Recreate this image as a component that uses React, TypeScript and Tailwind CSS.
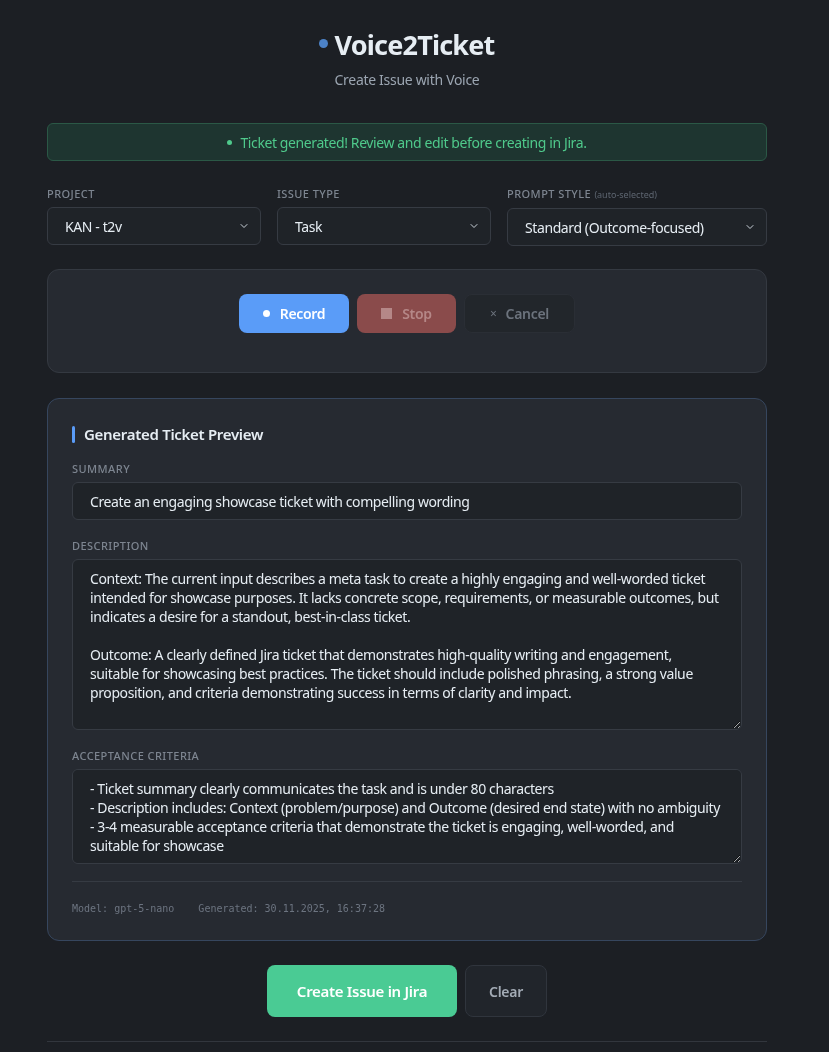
import { ChevronDown } from "lucide-react";

const font = { fontFamily: '"Noto Sans", "Segoe UI", sans-serif' };

function Label({ children }: { children: React.ReactNode }) {
  return (
    <div className="text-[11px] font-medium uppercase tracking-[0.04em] text-[#7d8590] mb-[6px] leading-[14px]">
      {children}
    </div>
  );
}

function Select({ value }: { value: string }) {
  return (
    <div className="h-[38px] flex items-center justify-between pl-[17px] pr-[10px] bg-[#1f2328] border border-[#363b43] rounded-[6px] text-[14px] tracking-[-0.4px] text-[#e6edf3]">
      <span>{value}</span>
      <ChevronDown className="w-[12px] h-[12px] text-[#c9d1d9]" strokeWidth={2} />
    </div>
  );
}

const fieldCls =
  "block w-full resize-y pl-[17px] pr-[19px] py-[9px] bg-[#1f2328] border border-[#363b43] rounded-[6px] text-[14px] leading-[19px] tracking-[-0.4px] text-[#e6edf3] outline-none";

export default function App() {
  return (
    <div className="min-h-screen bg-[#1c1f24] text-[#e6edf3] pr-[15px]" style={font}>
      <div className="max-w-[720px] mx-auto pt-[28px] pb-[12px]">
        {/* Header */}
        <div className="flex flex-col items-center">
          <div className="flex items-center gap-[6px]">
            <span className="w-[9px] h-[9px] rounded-full bg-[#4c82c7] -mt-[3px]" />
            <h1 className="text-[27px] font-bold leading-[34px] text-[#e6edf3] tracking-[-0.8px]">Voice2Ticket</h1>
          </div>
          <p className="text-[14px] text-[#9ba5b1] mt-[9px] leading-[18px] tracking-[-0.3px]">Create Issue with Voice</p>
        </div>

        {/* Status */}
        <div className="mt-[34px] h-[38px] flex items-center justify-center gap-[8px] rounded-[6px] bg-[#1e3530] border border-[#2b5846] text-[14px] tracking-[-0.4px] text-[#4fc98b]">
          <span className="w-[5px] h-[5px] rounded-full bg-[#4fc98b]" />
          Ticket generated! Review and edit before creating in Jira.
        </div>

        {/* Selects */}
        <div className="mt-[26px] grid grid-cols-[214px_214px_1fr] gap-[16px]">
          <div>
            <Label>Project</Label>
            <Select value="KAN - t2v" />
          </div>
          <div>
            <Label>Issue Type</Label>
            <Select value="Task" />
          </div>
          <div>
            <Label>
              Prompt Style <span className="normal-case font-normal text-[9px] tracking-normal text-[#5d6570]">(auto-selected)</span>
            </Label>
            <Select value="Standard (Outcome-focused)" />
          </div>
        </div>

        {/* Recorder */}
        <div className="mt-[23px] h-[104px] rounded-[12px] bg-[#262a31] border border-[#343941] pt-[24px] flex justify-center gap-[8px]">
          <button className="h-[39px] w-[110px] rounded-[8px] bg-[#5a9cf8] text-white text-[14px] font-semibold tracking-[-0.3px] flex items-center justify-center gap-[10px]">
            <span className="w-[7px] h-[7px] rounded-full bg-white" />
            Record
          </button>
          <button className="h-[39px] w-[99px] rounded-[8px] bg-[#8a4b4b] text-[#b58787] text-[14px] font-semibold tracking-[-0.3px] flex items-center justify-center gap-[10px]">
            <span className="w-[11px] h-[11px] bg-[#b58787]" />
            Stop
          </button>
          <button className="h-[39px] w-[111px] rounded-[8px] bg-[#22262b] border border-[#2a2e35] text-[#6c737d] text-[14px] font-semibold tracking-[-0.3px] flex items-center justify-center gap-[9px]">
            <span className="text-[12px] font-normal">×</span>
            Cancel
          </button>
        </div>

        {/* Preview */}
        <div className="mt-[25px] rounded-[12px] bg-[#262a31] border border-[#36465e] px-[24px] pt-[26px] pb-[24px]">
          <div className="flex items-center gap-[9px]">
            <span className="w-[3px] h-[17px] rounded-full bg-[#5a9cf8]" />
            <h2 className="text-[15px] font-semibold text-[#e6edf3] leading-[18px] tracking-[-0.3px]">Generated Ticket Preview</h2>
          </div>

          <div className="mt-[19px]">
            <Label>Summary</Label>
            <div className="h-[38px] flex items-center px-[17px] bg-[#1f2328] border border-[#363b43] rounded-[6px] text-[14px] tracking-[-0.4px] text-[#e6edf3]">
              Create an engaging showcase ticket with compelling wording
            </div>
          </div>

          <div className="mt-[19px]">
            <Label>Description</Label>
            <textarea
              readOnly
              className={fieldCls + " h-[171px]"}
              style={font}
              value={
                "Context: The current input describes a meta task to create a highly engaging and well-worded ticket intended for showcase purposes. It lacks concrete scope, requirements, or measurable outcomes, but indicates a desire for a standout, best-in-class ticket.\n\nOutcome: A clearly defined Jira ticket that demonstrates high-quality writing and engagement, suitable for showcasing best practices. The ticket should include polished phrasing, a strong value proposition, and criteria demonstrating success in terms of clarity and impact."
              }
            />
          </div>

          <div className="mt-[19px]">
            <Label>Acceptance Criteria</Label>
            <textarea
              readOnly
              className={fieldCls + " h-[95px]"}
              style={font}
              value={
                "- Ticket summary clearly communicates the task and is under 80 characters\n- Description includes: Context (problem/purpose) and Outcome (desired end state) with no ambiguity\n- 3-4 measurable acceptance criteria that demonstrate the ticket is engaging, well-worded, and suitable for showcase"
              }
            />
          </div>

          <div className="mt-[17px] border-t border-[#363b43] pt-[19px] flex gap-[24px] text-[10px] text-[#6c7480]" style={{ fontFamily: '"DejaVu Sans Mono", monospace' }}>
            <span>Model: gpt-5-nano</span>
            <span>Generated: 30.11.2025, 16:37:28</span>
          </div>
        </div>

        {/* Actions */}
        <div className="mt-[24px] flex justify-center gap-[8px]">
          <button className="h-[52px] w-[190px] rounded-[8px] bg-[#4acb94] text-white text-[15px] font-semibold tracking-[-0.3px]">
            Create Issue in Jira
          </button>
          <button className="h-[52px] w-[82px] rounded-[8px] bg-[#21252b] border border-[#30353d] text-[#a3abb5] text-[14px] font-semibold tracking-[-0.3px]">
            Clear
          </button>
        </div>

        <div className="mt-[24px] border-t border-[#32363d] pt-[40px]" />
      </div>
    </div>
  );
}
